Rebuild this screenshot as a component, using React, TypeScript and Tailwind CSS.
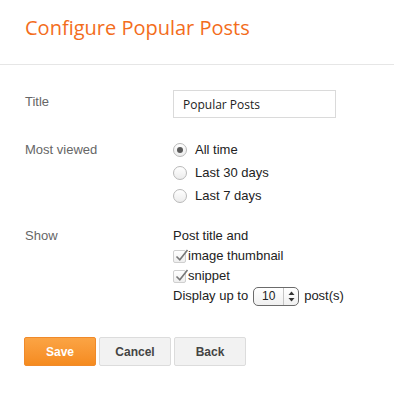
import React from "react"

const labelCls = "w-[148px] text-[13px] text-[#666]"

function Radio({ checked, label }: { checked?: boolean; label: string }) {
  return (
    <div className="flex h-[23px] items-center">
      <span className="flex h-[14px] w-[14px] items-center justify-center rounded-full border border-[#b9b9b9] bg-gradient-to-b from-white to-[#ececec]">
        {checked && <span className="h-[6px] w-[6px] rounded-full bg-[#5a5a5a]" />}
      </span>
      <span className="ml-[8px] text-[13px] text-[#222]">{label}</span>
    </div>
  )
}

function Checkbox({ label }: { label: string }) {
  return (
    <div className="flex h-[20px] items-center">
      <span className="relative h-[13px] w-[13px] rounded-[2px] border border-[#cfcfcf] bg-gradient-to-b from-white to-[#eeeeee]">
        <svg className="absolute -top-[3px] left-[1px]" width="14" height="14" viewBox="0 0 14 14">
          <path d="M1.5 8.5 L4.8 11.8 L12.5 2" fill="none" stroke="#777" strokeWidth="1.6" />
        </svg>
      </span>
      <span className="ml-[2px] text-[13px] text-[#222]">{label}</span>
    </div>
  )
}

export default function App() {
  return (
    <div className="h-[400px] w-[394px] bg-white font-['Liberation_Sans',Arial,sans-serif]">
      <div className="h-[64px] pl-[25px] pt-[14px]">
        <h1 className="font-['Open_Sans',sans-serif] text-[20px] leading-[28px] text-[#f36d1c]">
          Configure Popular Posts
        </h1>
      </div>
      <div className="h-px bg-[#e6e6e6]" />

      <div className="pl-[25px] pt-[25px]">
        <div className="flex">
          <div className={`${labelCls} pt-[4px] leading-[16px]`}>Title</div>
          <input
            readOnly
            value="Popular Posts"
            className="h-[28px] w-[163px] border border-[#dadada] px-[9px] font-['Open_Sans',sans-serif] text-[12px] text-[#222] outline-none"
          />
        </div>

        <div className="mt-[20px] flex">
          <div className={`${labelCls} leading-[23px]`}>Most viewed</div>
          <div>
            <Radio checked label="All time" />
            <Radio label="Last 30 days" />
            <Radio label="Last 7 days" />
          </div>
        </div>

        <div className="mt-[19px] flex">
          <div className={`${labelCls} leading-[20px]`}>Show</div>
          <div>
            <div className="h-[20px] text-[13px] leading-[20px] text-[#222]">Post title and</div>
            <Checkbox label="image thumbnail" />
            <Checkbox label="snippet" />
            <div className="flex h-[20px] items-center text-[13px] text-[#222]">
              <span>Display up to</span>
              <span className="ml-[5px] flex h-[19px] w-[46px] items-center rounded-[5px] border border-[#6b6b6b] bg-gradient-to-b from-white to-[#f0f0f0]">
                <span className="w-[29px] text-center text-[12px]">10</span>
                <span className="h-full w-px bg-[#c4c4c4]" />
                <svg className="ml-[4px]" width="7" height="11" viewBox="0 0 7 11">
                  <path d="M3.5 0.5 L6.5 4 L0.5 4 Z" fill="#333" />
                  <path d="M3.5 10.5 L6.5 7 L0.5 7 Z" fill="#333" />
                </svg>
              </span>
              <span className="ml-[5px]">post(s)</span>
            </div>
          </div>
        </div>

        <div className="-ml-px mt-[31px] flex gap-[3px]">
          <button className="h-[29px] w-[72px] rounded-[2px] border border-[#f08a2a] bg-gradient-to-b from-[#fba444] to-[#f58b1e] text-[12px] font-bold text-white">
            Save
          </button>
          <button className="h-[29px] w-[72px] rounded-[2px] border border-[#dcdcdc] bg-[#f2f2f2] text-[12px] font-bold text-[#444]">
            Cancel
          </button>
          <button className="h-[29px] w-[72px] rounded-[2px] border border-[#dcdcdc] bg-[#f2f2f2] text-[12px] font-bold text-[#444]">
            Back
          </button>
        </div>
      </div>
    </div>
  )
}
